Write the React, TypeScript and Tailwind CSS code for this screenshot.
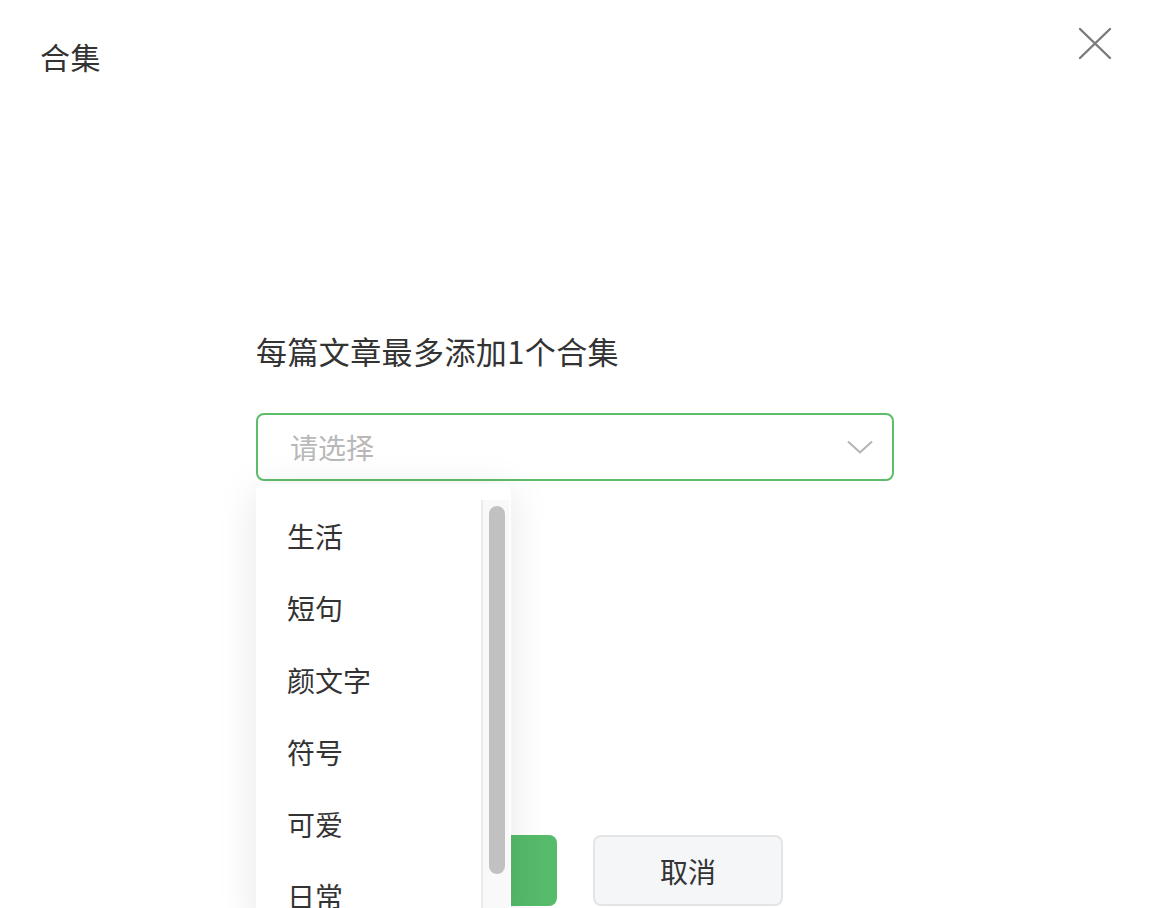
import React from 'react';

const items = ['生活', '短句', '颜文字', '符号', '可爱', '日常'];

export default function App() {
  return (
    <div
      className="relative h-[908px] w-[1152px] overflow-hidden bg-white text-[#333]"
      style={{ fontFamily: '"Noto Sans CJK SC", "Noto Sans", sans-serif' }}
    >
      {/* header */}
      <div className="flex items-start justify-between pl-[40px] pr-[40px] pt-[36px]">
        <h1 className="text-[30px] leading-[40px] font-normal tracking-[0.5px]">合集</h1>
        <button className="-mt-[9px] flex h-[34px] w-[34px] items-center justify-center text-[#7a7a7a]">
          <svg width="34" height="34" viewBox="0 0 34 34" fill="none">
            <path d="M2 2L32 31M32 2L2 31" stroke="currentColor" strokeWidth="2.4" strokeLinecap="round" />
          </svg>
        </button>
      </div>

      {/* body */}
      <div className="ml-[256px] mt-[255px] w-[638px]">
        <p className="text-[31px] leading-[40px] tracking-[0.4px]">每篇文章最多添加1个合集</p>

        <div className="relative mt-[42px]">
          <div className="flex h-[68px] items-center justify-between rounded-lg border-2 border-[#5cbd6b] pl-[32px] pr-[19px]">
            <span className="text-[28px] text-[#b8b8b8]">请选择</span>
            <svg width="26" height="14" viewBox="0 0 26 14" fill="none">
              <path d="M1 1.5L13 12.5L25 1.5" stroke="#b3b3b3" strokeWidth="2" />
            </svg>
          </div>

          {/* dropdown */}
          <div className="absolute left-0 top-[71px] z-10 h-[440px] w-[255px] overflow-hidden rounded-t-lg bg-white pt-[16px] shadow-[0_6px_40px_rgba(0,0,0,0.10)]">
            <div className="flex h-full">
              <ul className="flex-1">
                {items.map((it) => (
                  <li key={it} className="flex h-[72px] items-center pl-[31px] text-[28px] text-[#333]">
                    {it}
                  </li>
                ))}
              </ul>
              <div className="mr-[2px] w-[28px] border-l-2 border-[#ebebeb] bg-[#f9f9f9] pl-[6px] pt-[6px]">
                <div className="h-[368px] w-[16px] rounded-full bg-[#c1c1c1]" />
              </div>
            </div>
          </div>
        </div>

        <div className="mt-[354px] flex justify-center gap-[36px]">
          <button className="h-[71px] w-[190px] rounded-lg bg-[#56bb6a] text-[28px] text-white">确定</button>
          <button className="h-[71px] w-[190px] rounded-lg border-2 border-[#e3e4e6] bg-[#f5f6f8] text-[28px] text-[#333]">
            取消
          </button>
        </div>
      </div>
    </div>
  );
}
